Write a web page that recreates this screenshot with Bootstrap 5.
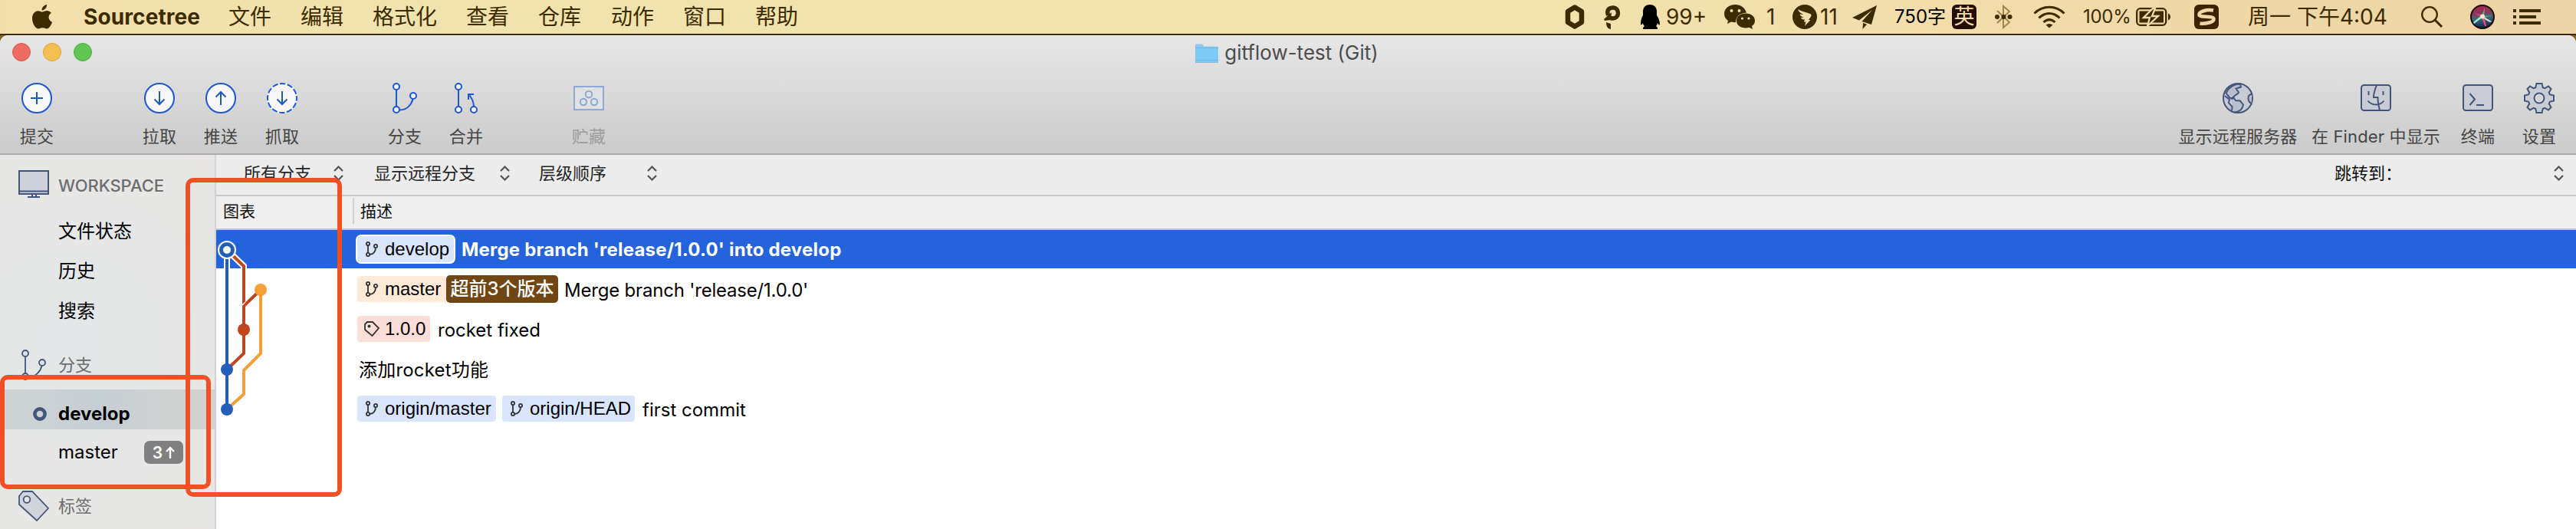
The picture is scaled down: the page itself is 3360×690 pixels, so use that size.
<!DOCTYPE html>
<html lang="zh-CN">
<head>
<meta charset="utf-8">
<title>gitflow-test (Git)</title>
<link href="https://cdn.jsdelivr.net/npm/bootstrap@5.3.0/dist/css/bootstrap.min.css" rel="stylesheet">
<script src="https://cdn.jsdelivr.net/npm/bootstrap@5.3.0/dist/js/bootstrap.bundle.min.js"></script>
<style>
  :root { --ui: Inter, "Noto Sans CJK SC", sans-serif; --helv: "Liberation Sans", "Noto Sans CJK SC", sans-serif; --ink: #3d2b00; }
  body { width: 3360px; height: 690px; overflow: hidden; background: #8a6220; font-family: var(--ui); font-size: 24px; line-height: 1; color: #000; }
  svg { display: block; flex: none; overflow: visible; }
  .line { white-space: nowrap; }
  .menubar { height: 46px; padding: 0 46px 0 42px; background: linear-gradient(90deg,#f3dfab 0,#f1e3ae 500px,#f1e3ae 2000px,#f2ddab 2500px,#eed7a6 3000px,#edd4a7 100%); border-bottom: 2px solid #3b2710; color: var(--ink); font-size: 28px; }
  .menus { display: grid; grid-template-columns: 67px 189px 94px 94px 122px 94px 95px 94px 94px 60px; align-items: center; }
  .status { display: grid; grid-template-columns: 50px 46px 35px 76px 55px 34px 36px 42px 55px 75px 56px 50px 65px 69px 76px 70px 226px 64px 56px 36px; align-items: center; }
  .status span, .menus span { white-space: nowrap; }
  .status .count { color: #000; font-size: 24px; }
  .status .power { font-size: 24px; letter-spacing: -.3px; }
  .app-name { font-weight: 700; letter-spacing: .1px; }
  .ime { width: 32px; height: 32px; border-radius: 6px; background: #230d00; color: #f1dcaa; font-size: 27px; text-align: center; line-height: 31px; }
  .win { height: 644px; border-radius: 10px 10px 0 0; background: #fff; overflow: hidden; }
  .chrome { height: 156px; background: linear-gradient(#e7e7e7,#cbcbcb); border-top: 1px solid #f5f5f5; border-bottom: 2px solid #acaaac; }
  .titlebar { height: 44px; color: #4d4d4d; font-size: 26px; padding-right: 3px; }
  .lights { left: 16px; top: 9px; gap: 16px; }
  .light { width: 24px; height: 24px; border-radius: 50%; border: 1px solid #d9534b; background: #ed6b60; }
  .light.amber { background: #f5bf4f; border-color: #dba23c; }
  .light.green { background: #61c554; border-color: #4dab40; }
  .tools { height: 109px; padding: 0 8px; color: #454545; font-size: 22px; letter-spacing: .15px; }
  .tool { width: 80px; padding-top: 17px; }
  .tool .line { margin-top: 17px; line-height: 26px; }
  .tool.globe { width: 174px; } .tool.finder { width: 186px; }
  .gapcol { width: 80px; }
  .off { color: #9b9b9b; }
  .side { width: 282px; border-right: 2px solid #d3d3d3; background: radial-gradient(circle at 90px 250px,#e3e6e7 0,#e6e7e6 160px,transparent 300px) #e8e7e5; }
  .side-row { height: 52px; padding-left: 76px; }
  .side-head { color: #6e6e6e; font-size: 22px; padding-left: 24px; }
  .side-head .ico { width: 52px; }
  .ws { font-weight: 500; letter-spacing: -.1px; }
  .h-ws { height: 74px; padding-top: 6px; } .h-br { height: 76px; padding-top: 12px; } .h-tag { height: 78px; padding-top: 18px; }
  .h-ws svg { margin-top: -4px; }
  .current { margin-left: 6px; padding: 12px 0 0 37px; background: linear-gradient(90deg,#cfd3d3,#c5ced4 45%,#cdd0d1 70%,#d2d2d1); font-weight: 700; }
  .current svg { margin-right: 15px; }
  .ahead { width: 51px; height: 30px; border-radius: 7px; background: #808080; color: #fff; font-size: 21px; font-weight: 600; margin-left: 34px; }
  .filters { height: 54px; background: #ececec; border-bottom: 2px solid #c8c8c8; color: #262626; font-size: 22px; padding-left: 36px; }
  .filters .pick { height: 48px; }
  .p1 { width: 170px; } .p2 { width: 215px; } .p3 { width: 154px; }
  .p1 svg { margin-left: auto; margin-right: 40px; } .p2 svg { margin-left: auto; margin-right: 38px; }
  .jump { width: 299px; margin-right: 16px; color: #111; }
  .heads { height: 44px; background: #efefef; border-bottom: 2px solid #c4c4c4; font-size: 21px; color: #111; }
  .heads .c1 { width: 180px; height: 34px; margin: 2px 0 6px; padding-left: 9px; border-right: 2px solid #d0d0d0; }
  .heads .c2 { padding: 0 0 4px 8px; }
  .commit { height: 52px; padding: 2px 0 0 184px; }
  .commit.picked { height: 50px; background: #2463db; color: #fff; font-weight: 700; padding: 0 0 0 182px; }
  .ref { height: 34px; border-radius: 4px; background: #d8e5fd; color: #000; font-family: var(--helv); font-weight: 400; padding-left: 11px; }
  .ref svg { margin-right: 9px; }
  .picked .ref { height: 38px; width: 130px; border: 2px solid #fff; border-radius: 7px; }
  .r-master { background: #fdebd7; width: 116px; } .r-tag { background: #fbded7; width: 95px; padding-left: 9px; } .r-tag svg { margin-right: 7px; }
  .r-om { width: 181px; } .r-oh { width: 173px; margin-left: 8px; }
  .lead3 { width: 146px; height: 36px; border-radius: 5px; background: #704714; color: #fff; font-weight: 500; }
  .msg { margin-left: 9px; padding-top: 4px; }
  .m1 { letter-spacing: .2px; margin-left: 8px; padding-top: 2px; } .m2 { letter-spacing: -.2px; margin-left: 8px; } .m3, .m5 { margin-left: 10px; }
  .m4 { letter-spacing: .2px; margin-left: 2px; padding-top: 3px; }
  .graph { left: 0; top: 98px; }
  .markup { border: 6px solid #f05023; border-radius: 10px; }
  .box-graph { left: 242px; top: 232px; width: 204px; height: 416px; }
  .box-branch { left: 0; top: 489px; width: 275px; height: 149px; }
</style>
</head>
<body class="position-relative">
<svg width="0" height="0" class="position-absolute">
  <defs>
    <symbol id="fork" viewBox="0 0 16 20"><g fill="none" stroke="currentColor" stroke-width="1.8"><circle cx="3" cy="3" r="2.1"/><circle cx="3" cy="17" r="2.1"/><circle cx="13" cy="6" r="2.1"/><path d="M3 5v10M5 17c5 0 8-4 8-9"/></g></symbol>
    <symbol id="updown" viewBox="0 0 13 20"><path d="M1 7l5.500-5.500L12 7M1 13l5.500 5.500L12 13" fill="none" stroke="#555" stroke-width="2.200"/></symbol>
  </defs>
</svg>

<header class="menubar d-flex justify-content-between">
  <nav class="menus">
    <svg width="26" height="32" viewBox="0 0 26 32" fill="#3d2b00"><path d="M19 0c.3 3.800-2.800 7.600-6.400 7.500C12.200 3.900 15.600.6 19 0zM13.200 9.600c1.500 0 3.400-1.500 6-1.500 2.300 0 4.400 1.200 5.700 3-5 3-4.200 9.600 1.100 11.600C24.800 26.700 21.900 31.500 19 31.500c-2 0-3-1.200-5.500-1.200S9.800 31.500 8 31.500C4.300 31.500 0 24.500 0 18 0 11.500 4 8.200 7.800 8.200c2.200 0 4.200 1.400 5.400 1.400z"/></svg>
    <span class="app-name">Sourcetree</span><span>文件</span><span>编辑</span><span>格式化</span><span>查看</span><span>仓库</span><span>动作</span><span>窗口</span><span>帮助</span>
  </nav>
  <div class="status">
    <svg width="24" height="32" viewBox="0 0 24 32"><path d="M12 3.500L21 9v14l-9 5.500L3 23V9z" fill="none" stroke="#3d2b00" stroke-width="6.500" stroke-linejoin="round"/></svg>
    <svg width="22" height="32" viewBox="0 0 22 32"><path d="M5.500 14C3 6 8 4 12 4s6.500 3 6.500 7-3 7-7 7c-3 0-5-1-6.500-3" fill="none" stroke="#3d2b00" stroke-width="5.500"/><path d="M0 19l10-9-1 10-8 1zM3 23l6 2v7c-4 0-6-4-6-9z" fill="#3d2b00"/></svg>
    <svg width="28" height="32" viewBox="0 0 28 32"><path d="M14 0c6 0 9 4 9 9v5c2 3 4 7 4 12-1 1-2 0-3-2-.5 2-1 3-2 4l2 2v2H5v-2l2-2c-1-1-2-2-2-4-1 2-3 3-3 2 0-5 1-9 3-12V9c0-5 3-9 9-9z" fill="#000"/></svg>
    <span>99+</span>
    <svg width="40" height="32" viewBox="0 0 40 32"><path d="M14.500 0C6 0 0 5 0 12c0 4 2 7 5 9l-1 4 5-2.500c2 .6 4 .8 6 .8C15 16 20 11 29 10.500 27 4 21 0 14.500 0z" fill="#3d2b00"/><path d="M28 11.500c-7 0-12 4-12 9.500s5 9.500 12 9.500c1.500 0 3-.3 4.500-.7L37 32l-1-4c3-2 4-4 4-7 0-5.500-5-9.500-12-9.500z" fill="#3d2b00"/><g fill="#f1e1ad"><circle cx="9.500" cy="8" r="2"/><circle cx="19.500" cy="8" r="2"/><circle cx="23.500" cy="18" r="1.600"/><circle cx="32" cy="18" r="1.600"/></g></svg>
    <span>1</span>
    <svg width="32" height="32" viewBox="0 0 32 32"><circle cx="16" cy="16" r="16" fill="#3d2b00"/><path d="M7 6c5 3 11 4 17 6.500 1 1 .5 2-.5 4L21 20h2.500L16 28l1.500-5.500H15l1-3c-3 .5-4-1-5-2.500l4-.5c-3-.5-5-2-5.500-4l5 .6C10 11 8 9 7 6z" fill="#f1dfac"/></svg>
    <span>11</span>
    <svg width="32" height="31" viewBox="0 0 32 31"><path d="M32 0L0 16l9 3.500L26 6 12.500 21 25 25zM14 23l5 1.700L13.500 31z" fill="#3d2b00"/></svg>
    <span class="count">750字</span>
    <div class="ime">英</div>
    <svg width="23" height="32" viewBox="0 0 23 32"><path d="M3 8l16 15-8 7V2l8 7L3 24" fill="none" stroke="#9c854f" stroke-width="2"/><g fill="#3d2b00"><circle cx="3" cy="16" r="3"/><circle cx="11.500" cy="16" r="3"/><circle cx="19.500" cy="16" r="3"/></g></svg>
    <svg width="42" height="30" viewBox="0 0 42 30"><g fill="none" stroke="#3d2b00" stroke-width="3"><path d="M1.500 10.500c11-11 28-11 39 0M7.500 16.500c8-8 19-8 27 0M13.500 22c5-4.500 10-4.500 15 0"/></g><path d="M16.500 25.500c3-2 6-2 9 0L21 29.500z" fill="#3d2b00"/></svg>
    <span class="power">100%</span>
    <svg width="46" height="24" viewBox="0 0 46 24"><rect x="1.200" y="1.200" width="38" height="21.600" rx="4.500" fill="none" stroke="#3d2b00" stroke-width="2.300"/><rect x="4.500" y="4.500" width="31.500" height="15" fill="#3d2b00"/><path d="M42 7.500c4 1 4 8 0 9z" fill="#3d2b00"/><path d="M22 1L10 13h8l-3 11 14-13h-8l4-10z" fill="#3d2b00" stroke="#f0daa9" stroke-width="2.300"/></svg>
    <svg width="32" height="32" viewBox="0 0 32 32"><rect width="32" height="32" rx="6" fill="#3d2400"/><path d="M25 7.500C16 6 6 9 6.500 13.500 7 17 25 14.500 25.500 18.500 26 23 15 25.500 7.500 24.500" fill="none" stroke="#eed8a8" stroke-width="4.600"/></svg>
    <span>周一 下午4:04</span>
    <svg width="28" height="28" viewBox="0 0 28 28"><circle cx="11" cy="11" r="9.800" fill="none" stroke="#3d2b00" stroke-width="2.300"/><path d="M18 18l9 9" stroke="#3d2b00" stroke-width="3"/></svg>
    <svg width="32" height="32" viewBox="0 0 32 32"><defs><linearGradient id="siri" x1=".4" y1="0" x2=".55" y2="1"><stop offset="0" stop-color="#a82352"/><stop offset=".35" stop-color="#8a3a58"/><stop offset=".55" stop-color="#3c6a72"/><stop offset=".8" stop-color="#24406e"/><stop offset="1" stop-color="#101c30"/></linearGradient></defs><circle cx="16" cy="16" r="15" fill="url(#siri)" stroke="#160c04" stroke-width="2"/><path d="M4 23l11-9 2 2-12 9z" fill="#a8e4c4"/><path d="M6 11l10 3-1 3z" fill="#c8508a"/><path d="M15 15l4-11-1 11 10-1-10 3z" fill="#54b89e"/><path d="M16 15l12 7-2 1-11-6z" fill="#d6ecca"/><path d="M15 16l3 0 3 12-2 0z" fill="#f04d7d"/><circle cx="16" cy="15.500" r="3" fill="#e8efc9"/></svg>
    <svg width="36" height="20" viewBox="0 0 36 20" fill="#3d2b00"><path d="M0 0h4v4H0zM8 0h28v4H8zM0 8h4v4H0zM8 8h22v4H8zM0 16h4v4H0zM8 16h28v4H8z"/></svg>
  </div>
</header>

<main class="win d-flex flex-column">
  <section class="chrome">
    <div class="titlebar position-relative d-flex justify-content-center align-items-center">
      <div class="lights position-absolute d-flex"><i class="light"></i><i class="light amber"></i><i class="light green"></i></div>
      <svg width="30" height="25" viewBox="0 0 30 25"><path d="M0 24V1.500Q0 .5 1 .5h8l2.500 3H29q1 0 1 1V24z" fill="#8bc9ee"/><path d="M0 5.500h30V23q0 1-1 1H1q-1 0-1-1z" fill="#7fcbf7"/><path d="M0 5.500h30M0 21.500h30" stroke="#6cb5e0"/><path d="M0 24.500h30" stroke="#a4b4bd"/></svg>
      <span class="line ms-2">gitflow-test (Git)</span>
    </div>
    <div class="tools d-flex justify-content-between">
      <div class="d-flex">
        <div class="tool d-flex flex-column align-items-center">
          <svg width="40" height="40" viewBox="0 0 40 40" fill="none" stroke="#1b58cf" stroke-width="2"><circle cx="20" cy="20" r="19" fill="#f8f8f8"/><path d="M12 20h16M20 12v16"/></svg><span class="line">提交</span></div>
        <div class="gapcol"></div>
        <div class="tool d-flex flex-column align-items-center">
          <svg width="40" height="40" viewBox="0 0 40 40" fill="none" stroke="#1b58cf" stroke-width="2"><circle cx="20" cy="20" r="19" fill="#f8f8f8"/><path d="M20 11v17M13.500 21.500L20 28l6.500-6.500"/></svg><span class="line">拉取</span></div>
        <div class="tool d-flex flex-column align-items-center">
          <svg width="40" height="40" viewBox="0 0 40 40" fill="none" stroke="#1b58cf" stroke-width="2"><circle cx="20" cy="20" r="19" fill="#f8f8f8"/><path d="M20 29V12M13.500 18.500L20 12l6.500 6.500"/></svg><span class="line">推送</span></div>
        <div class="tool d-flex flex-column align-items-center">
          <svg width="40" height="40" viewBox="0 0 40 40" fill="none" stroke="#1b58cf" stroke-width="2"><circle cx="20" cy="20" r="20" fill="#f8f8f8" stroke="none"/><circle cx="20" cy="20" r="19" stroke-dasharray="7.450 2.500" stroke-dashoffset="3.700"/><path d="M20 11v17M13.500 21.500L20 28l6.500-6.500"/></svg><span class="line">抓取</span></div>
        <div class="gapcol"></div>
        <div class="tool d-flex flex-column align-items-center">
          <svg width="32" height="40" viewBox="0 0 32 40" fill="none" stroke="#1b58cf" stroke-width="2"><path d="M5 9v22M9.500 35.500C19 35.500 25 28 26.500 21"/><g fill="#f4f4f4"><circle cx="5" cy="5" r="4"/><circle cx="5" cy="35" r="4"/><circle cx="27" cy="17" r="4"/></g></svg><span class="line">分支</span></div>
        <div class="tool d-flex flex-column align-items-center">
          <svg width="30" height="40" viewBox="0 0 30 40" fill="none" stroke="#1b58cf" stroke-width="2"><path d="M5 9v22M25 31c0-6-2-10-5.500-14.500M18 22v-7h7"/><g fill="#f4f4f4"><circle cx="5" cy="5" r="4"/><circle cx="5" cy="35" r="4"/><circle cx="25" cy="35" r="4"/></g></svg><span class="line">合并</span></div>
        <div class="gapcol"></div>
        <div class="tool off d-flex flex-column align-items-center">
          <svg width="40" height="40" viewBox="0 0 40 40" fill="none" stroke="#90a6d4" stroke-width="2"><rect x="1" y="5" width="38" height="30" fill="#dfe1e5"/><circle cx="20" cy="15" r="4.200"/><circle cx="13" cy="25" r="4.200"/><circle cx="27" cy="25" r="4.200"/></svg><span class="line">贮藏</span></div>
      </div>
      <div class="d-flex">
        <div class="tool globe d-flex flex-column align-items-center">
          <svg width="40" height="40" viewBox="0 0 40 40" fill="#c7cbd6" stroke="#44557a" stroke-width="2"><circle cx="20" cy="20" r="19"/><path d="M23 1.500l1 4-6.500 2 3.500 5c-.5 2-2 2.500-3.500 3L13.500 19l-2.500 1.500c-2-1-4-4-6.500-7C8 6 14 1.500 23 1.500zM11.500 21l3.500-1 2 3 6 .5c1 2 3 3.500 4 5-1 6-5 9.500-11 10l-1.500-1M3 17c2 2 5 3 6 5l-1 4 4.500 5-.5 7M38.500 15c-7 0-6 9-1 12" fill="#b9bfcf" stroke-width="1.900"/></svg><span class="line">显示远程服务器</span></div>
        <div class="tool finder d-flex flex-column align-items-center">
          <svg width="40" height="40" viewBox="0 0 40 40" fill="none" stroke="#44557a" stroke-width="2"><rect x="1" y="3" width="38" height="33" rx="3.500" fill="#c9ccd5"/><path d="M21 3c-2 5-4 10-4 16h5.500c0 6 1 11 2.500 17M9.500 23.500c5 6.500 16 6.500 21 0M10.500 11v5M29.500 11v5"/></svg><span class="line">在 Finder 中显示</span></div>
        <div class="tool d-flex flex-column align-items-center">
          <svg width="40" height="40" viewBox="0 0 40 40" fill="none" stroke="#44557a" stroke-width="2"><rect x="1" y="3" width="38" height="33" rx="3.500" fill="#c9ccd5"/><path d="M9.500 14l6.500 7.500L9.500 29M18 29h10"/></svg><span class="line">终端</span></div>
        <div class="tool d-flex flex-column align-items-center">
          <svg width="40" height="40" viewBox="0 0 40 40" fill="#c9ccd5" stroke="#44557a" stroke-width="2"><path d="M16.500 1h7l1.300 5.200 2.500 1L32 4.500 35.500 8l-2.700 4.700 1 2.500 5.200 1.300v7l-5.200 1.300-1 2.500 2.700 4.700-3.500 3.500-4.700-2.700-2.500 1L23.500 39h-7l-1.300-5.200-2.500-1L8 35.500 4.500 32l2.700-4.700-1-2.500L1 23.500v-7l5.200-1.300 1-2.500L4.500 8 8 4.500l4.700 2.700 2.500-1z"/><circle cx="20" cy="20" r="6.500" fill="#d6d6d6"/></svg><span class="line">设置</span></div>
      </div>
    </div>
  </section>

  <section class="d-flex flex-grow-1">
    <aside class="side flex-shrink-0">
      <div class="side-head h-ws d-flex align-items-center"><div class="ico"><svg width="40" height="36" viewBox="0 0 40 36" fill="none" stroke="#44557a" stroke-width="2"><rect x="1" y="1" width="38" height="30" fill="#cdd1da"/><path d="M2 27.500h36" /><path d="M18 31v4M23 31v4M12 35h16"/></svg></div><span class="line ws">WORKSPACE</span></div>
      <div class="side-row d-flex align-items-center">文件状态</div>
      <div class="side-row d-flex align-items-center">历史</div>
      <div class="side-row d-flex align-items-center">搜索</div>
      <div class="side-head h-br d-flex align-items-center"><div class="ico ps-1"><svg width="32" height="40" viewBox="0 0 32 40" fill="none" stroke="#44557a" stroke-width="1.800"><path d="M5 9v22M9.500 35.500C19 35.500 25 28 26.500 21"/><g fill="#dcdfe3"><circle cx="5" cy="5" r="4"/><circle cx="5" cy="35" r="4"/><circle cx="27" cy="17" r="4"/></g></svg></div><span>分支</span></div>
      <div class="side-row current d-flex align-items-center"><svg width="18" height="18"><circle cx="9" cy="9" r="6.600" fill="none" stroke="#44557a" stroke-width="4.600"/></svg><span>develop</span></div>
      <div class="side-row d-flex align-items-center pt-2"><span>master</span><span class="ahead d-flex align-items-center justify-content-center">3<svg width="12" height="16" viewBox="0 0 12 16" class="ms-1"><path d="M6 16V2M1 7l5-5 5 5" fill="none" stroke="#fff" stroke-width="2.400"/></svg></span></div>
      <div class="side-head h-tag d-flex align-items-center"><div class="ico"><svg width="40" height="40" viewBox="0 0 40 40" fill="#d1d4da" stroke="#44557a" stroke-width="1.800"><path d="M1 7l5-6h12l21 22-15 16L1 18z"/><circle cx="11" cy="11.500" r="4.300" fill="#e3e4e5"/></svg></div><span>标签</span></div>
    </aside>

    <div class="flex-grow-1 position-relative">
      <div class="filters d-flex justify-content-between">
        <div class="d-flex">
          <div class="pick p1 d-flex align-items-center"><span class="line">所有分支</span><svg width="13" height="20"><use href="#updown"/></svg></div>
          <div class="pick p2 d-flex align-items-center"><span class="line">显示远程分支</span><svg width="13" height="20"><use href="#updown"/></svg></div>
          <div class="pick p3 d-flex align-items-center"><span class="line">层级顺序</span><svg class="ms-auto" width="13" height="20"><use href="#updown"/></svg></div>
        </div>
        <div class="pick jump d-flex align-items-center justify-content-between"><span class="line">跳转到：</span><svg width="13" height="20"><use href="#updown"/></svg></div>
      </div>
      <div class="heads d-flex"><div class="c1 d-flex align-items-center">图表</div><div class="c2 d-flex align-items-center">描述</div></div>
      <div class="commit picked d-flex align-items-center"><span class="ref d-flex align-items-center"><svg width="16" height="20" color="#333"><use href="#fork"/></svg>develop</span><span class="msg m1 line">Merge branch 'release/1.0.0' into develop</span></div>
      <div class="commit d-flex align-items-center"><span class="ref r-master d-flex align-items-center"><svg width="16" height="20" color="#333"><use href="#fork"/></svg>master</span><span class="lead3 line d-flex align-items-center justify-content-center">超前3个版本</span><span class="msg m2 line">Merge branch 'release/1.0.0'</span></div>
      <div class="commit d-flex align-items-center"><span class="ref r-tag d-flex align-items-center"><svg width="20" height="20" viewBox="0 0 20 20"><path d="M1 4l3-3h7l8 8-8.500 10L1 11z" fill="none" stroke="#333" stroke-width="1.800"/><circle cx="6.500" cy="6.500" r="2" fill="#333"/></svg>1.0.0</span><span class="msg m3 line">rocket fixed</span></div>
      <div class="commit d-flex align-items-center"><span class="line m4">添加rocket功能</span></div>
      <div class="commit d-flex align-items-center"><span class="ref r-om d-flex align-items-center"><svg width="16" height="20" color="#333"><use href="#fork"/></svg>origin/master</span><span class="ref r-oh d-flex align-items-center"><svg width="16" height="20" color="#333"><use href="#fork"/></svg>origin/HEAD</span><span class="msg m5 line">first commit</span></div>

      <!-- commit graph, drawn over the first column -->
      <svg class="graph position-absolute" width="170" height="260" viewBox="0 0 170 260" fill="none" stroke-width="4">
        <path d="M14 26v24" stroke="#fff" stroke-width="8"/><path d="M14 26l22 21v3" stroke="#fff" stroke-width="8"/>
        <path d="M58 78v83l-22 22v31l-22 20" stroke="#f49f38"/>
        <path d="M14 26l22 21v114l-22 21M58 78L36 99" stroke="#bf461e"/>
        <path d="M34 98l4-4" stroke="#fff" stroke-width="1.500"/>
        <path d="M14 26v208" stroke="#235fb8"/>
        <circle cx="14" cy="26" r="12" fill="#fff"/><circle cx="14" cy="26" r="7.500" stroke="#235fb8" stroke-width="5"/>
        <circle cx="58" cy="78" r="8" fill="#f49f38"/><circle cx="36" cy="130" r="8" fill="#bf461e"/>
        <circle cx="14" cy="182" r="8" fill="#235fb8"/><circle cx="14" cy="234" r="8" fill="#235fb8"/>
      </svg>
    </div>
  </section>
</main>
<div class="markup box-graph position-absolute"></div>
<div class="markup box-branch position-absolute"></div>
</body>
</html>
